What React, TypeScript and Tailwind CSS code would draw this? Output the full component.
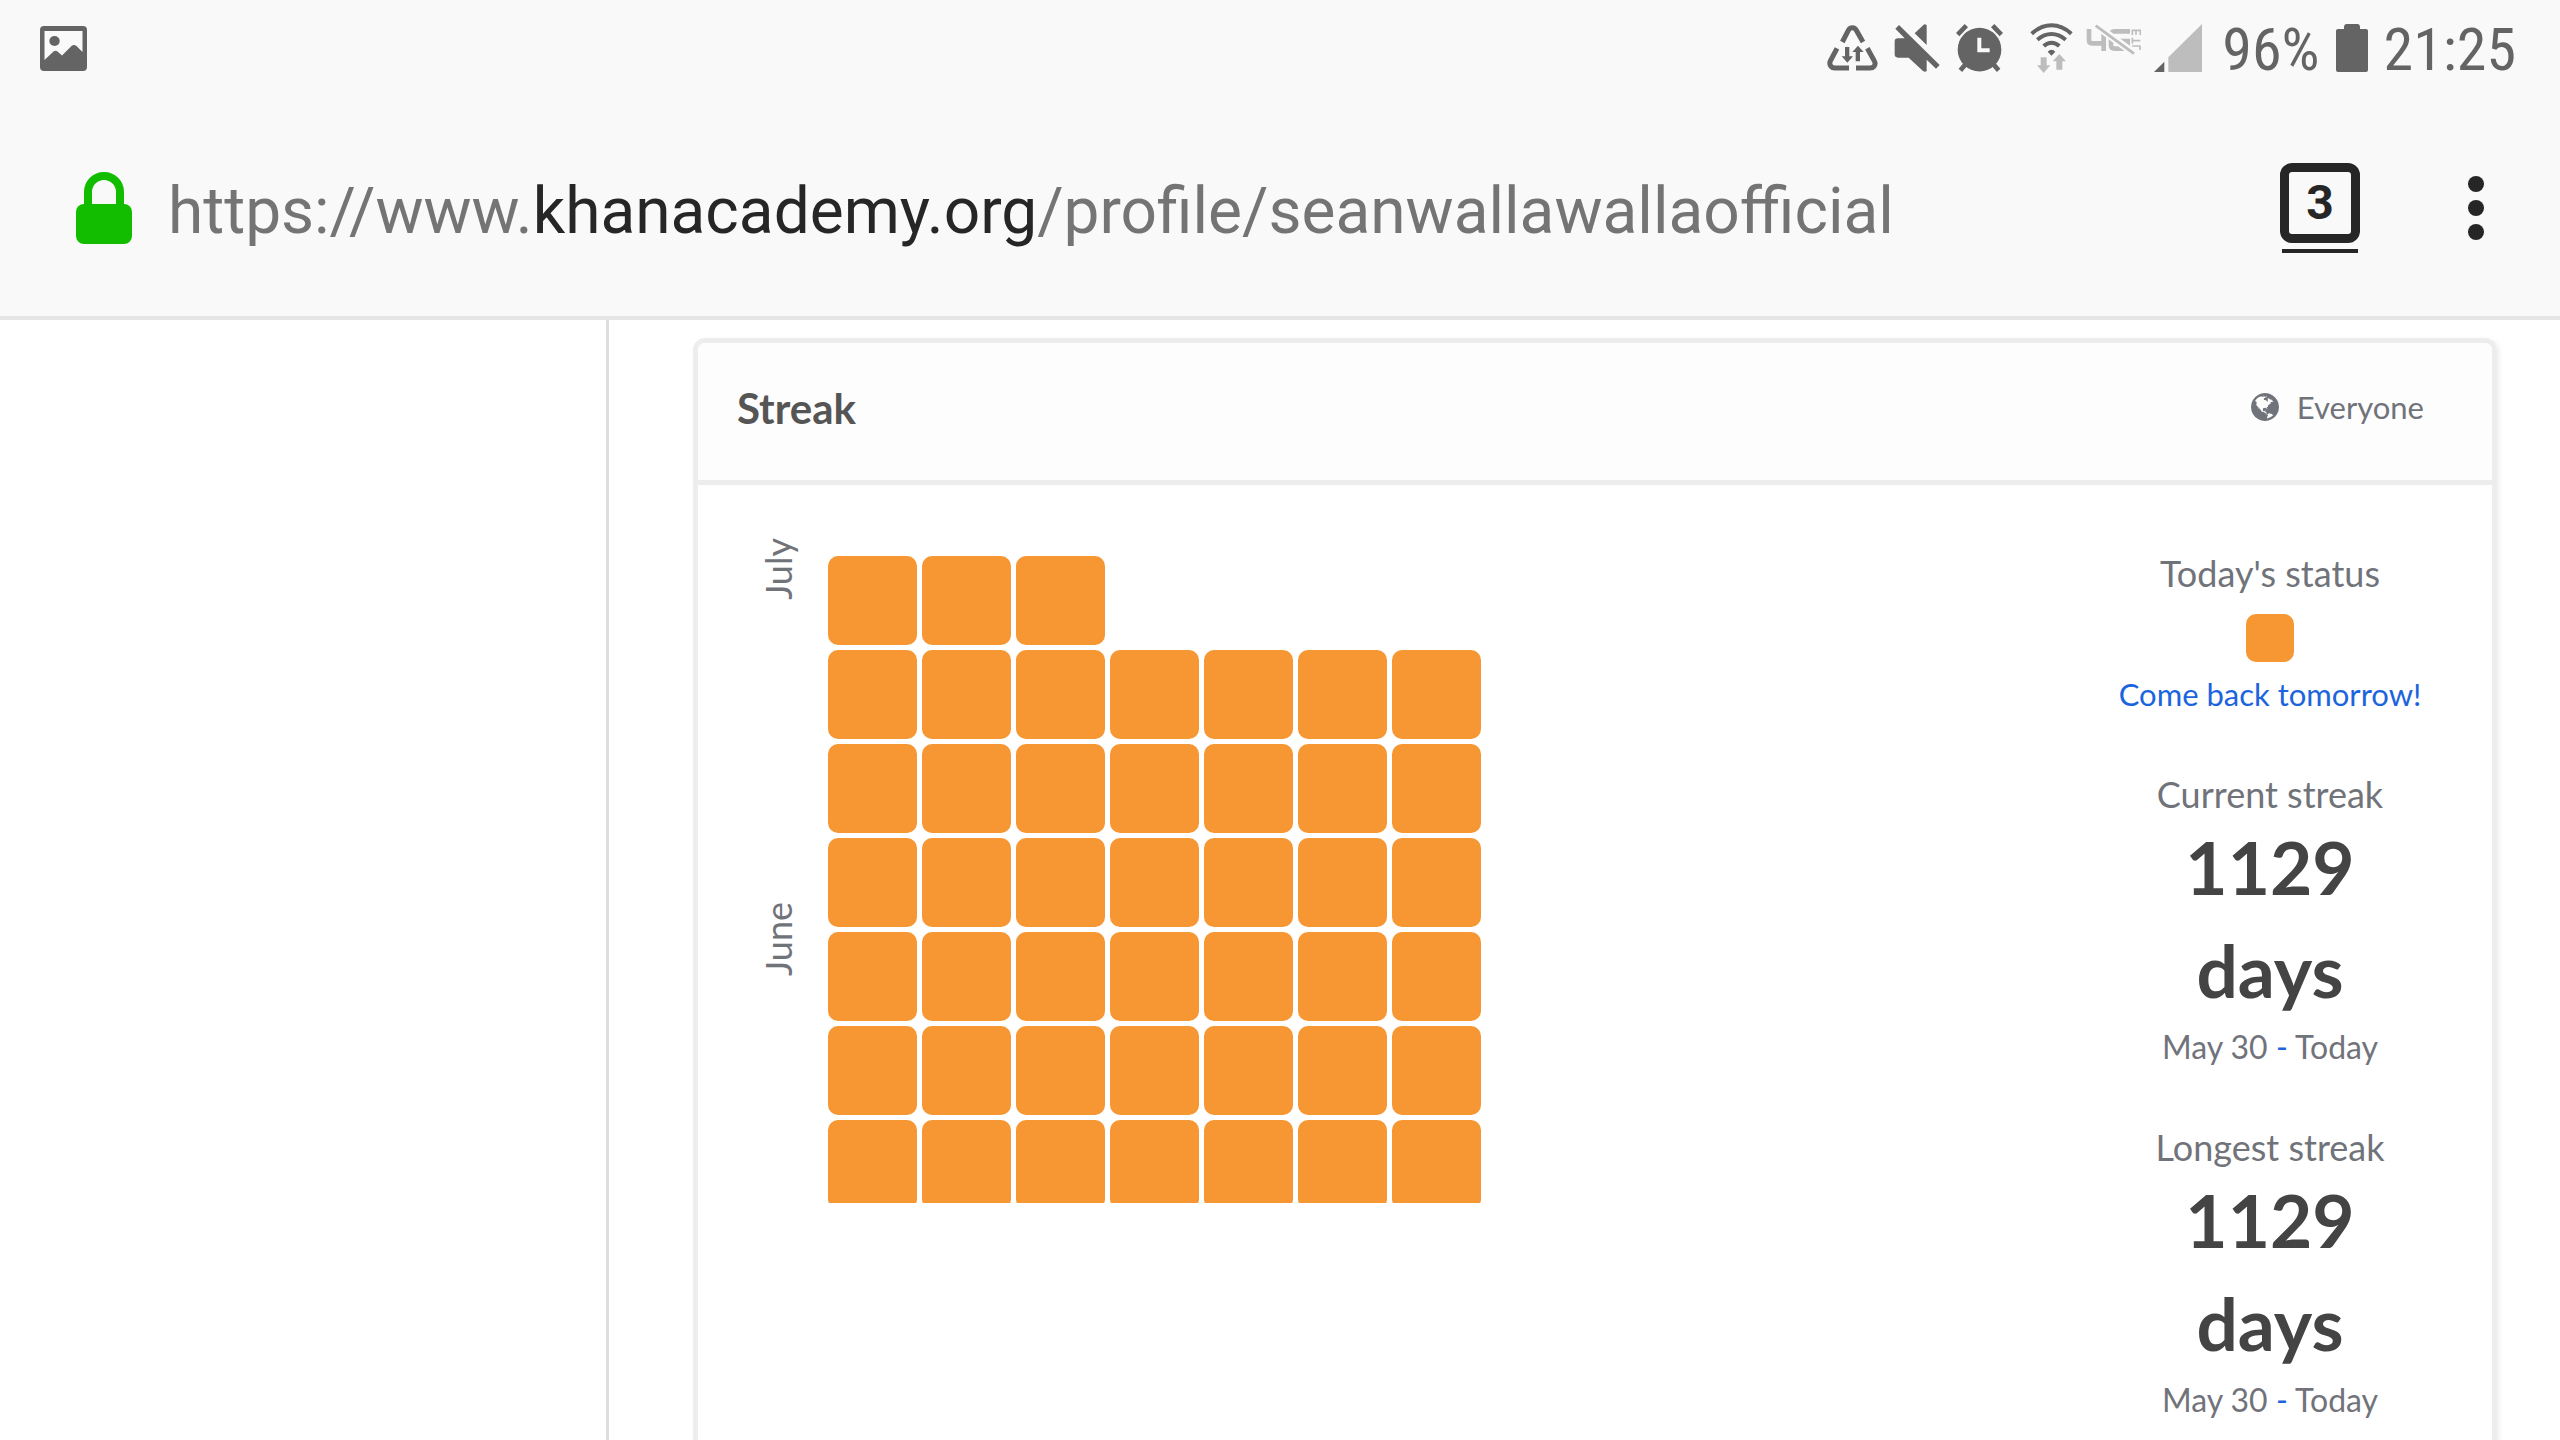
import type { ReactNode } from "react";

const GLOBE_PATH =
  "M768 128q209 0 385.500 103t279.500 279.500 103 385.500-103 385.500-279.500 279.500-385.500 103-385.500-103-279.500-279.500-103-385.500 103-385.500 279.500-279.500 385.500-103zm274 521q-2 1-9.500 9.500t-13.500 9.500q2 0 4.500-5t5-11 3.500-7q6-7 22-15 14-6 52-12 34-8 51 11-2-2 9.500-13t14.500-12q3-2 15-4.500t15-7.500l2-22q-12 1-17.500-7t-6.500-21q0 2-6 8 0-7-4.500-8t-11.500 1-9 1q-10-3-15-7.500t-8-16.500-4-15q-2-5-9.500-11t-9.500-10q-1-2-2.500-5.500t-3-6.500-4-5.500-5.500-2.500-7 5-7.500 10-4.500 5q-3-2-6-1.500t-4.500 1-4.500 3-5 3.500q-3 2-8.500 3t-8.500 2q15-5-1-11-10-4-16-3 9-4 7.500-12t-8.500-14h5q-1-4-8.500-8.500t-17.500-8.500-13-6q-8-5-34-9.500t-33-.5q-5 6-4.500 10.500t4 14 3.500 12.500q1 6-5.500 13t-6.500 12q0 7 14 15.500t10 21.500q-3 8-16 16t-16 12q-5 8-1.500 18.500t10.500 16.500q2 2 1.500 4t-3.500 4.500-5.500 4-6.500 3.500l-3 2q-11 5-20.500-6t-13.500-26q-7-25-16-30-23-8-29 1-5-13-41-26-25-9-58-4 6-1 0-15-7-15-19-12 3-6 4-17.500t1-13.500q3-13 12-23 1-1 7-8.500t9.500-13.500.5-6q35 4 50-11 5-5 11.500-17t10.500-17q9-6 14-5.500t14.500 5.500 14.500 5q14 1 15.500-11t-7.500-20q12 1 3-17-4-7-8-9-12-4-27 5-8 4 2 8-1-1-9.500 10.500t-16.500 17.500-16-5q-1-1-5.500-13.500t-9.500-13.500q-8 0-16 15 3-8-11-15t-24-8q19-12-8-27-7-4-20.500-5t-19.500 4q-5 7-5.500 11.500t5 8 10.500 5.500 11.500 4 8.500 3q14 10 8 14-2 1-8.500 3.500t-11.500 4.500-6 4q-3 4 0 14t-2 14q-5-5-9-17.500t-7-16.500q7 9-25 6l-10-1q-4 0-16 2t-20.500 1-13.500-8q-4-8 0-20 1-4 4-2-4-3-11-9.500t-10-8.500q-46 15-94 41 6 1 12-1 5-2 13-6.500t10-5.500q34-14 42-7l5-5q14 16 20 25-7-4-30-1-20 6-22 12 7 12 5 18-4-3-11.500-10t-14.500-11-15-5q-16 0-22 1-146 80-235 222 7 7 12 8 4 1 5 9t2.500 11 11.500-3q9 8 3 19 1-1 44 27 19 17 21 21 3 11-10 18-1-2-9-9t-9-4q-3 5 .5 18.500t10.500 12.500q-7 0-9.500 16t-2.500 35.500-1 23.500l2 1q-3 12 5.500 34.500t21.500 19.500q-13 3 20 43 6 8 8 9 3 2 12 7.500t15 10 10 10.500q4 5 10 22.500t14 23.500q-2 6 9.500 20t10.500 23q-1 0-2.500 1t-2.500 1q3 7 15.500 14t15.500 13q1 3 2 10t3 11 8 2q2-20-24-62-15-25-17-29-3-5-5.500-15.500t-4.500-14.500q2 0 6 1.500t8.500 3.500 7.500 4 2 3q-3 7 2 17.500t12 18.500 17 19 12 13q6 6 14 19.500t0 13.500q9 0 20 10t17 20q5 8 8 26t5 24q2 7 8.500 13.500t12.500 9.500l16 8 13 7q5 2 18.500 10.500t21.500 11.500q10 4 16 4t14.500-2.500 13.500-3.500q15-2 29 15t21 21q36 19 55 11-2 1 .5 7.500t8 15.500 9 14.500 5.500 8.500q5 6 18 15t18 15q6-4 7-9-3 8 7 20t18 10q14-3 14-32-31 15-49-18 0-1-2.500-5.500t-4-8.500-2.500-8.500 0-7.500 5-3q9 0 10-3.500t-2-12.500-4-13q-1-8-11-20t-12-15q-5 9-16 8t-16-9q0 1-1.500 5.500t-1.500 6.500q-13 0-15-1 1-3 2.500-17.500t3.500-22.500q1-4 5.500-12t7.500-14.500 4-12.500-4.500-9.500-17.500-2.500q-19 1-26 20-1 3-3 10.500t-5 11.500-9 7q-7 3-24 2t-24-5q-13-8-22.500-29t-9.500-37q0-10 2.500-26.500t3-25-5.500-24.500q3-2 9-9.500t10-10.500q2-1 4.500-1.500t4.500 0 4-1.500 3-6q-1-1-4-3-3-3-4-3 7 3 28.500-1.500t27.500 1.500q15 11 22-2 0-1-2.500-9.500t-.5-13.500q5 27 29 9 3 3 15.500 5t17.500 5q3 2 7 5.500t5.500 4.500 5-.5 8.500-6.500q10 14 12 24 11 40 19 44 7 3 11 2t4.500-9.500 0-14-1.500-12.500l-1-8v-18l-1-8q-15-3-18.500-12t1.500-18.500 15-18.500q1-1 8-3.500t15.500-6.500 12.500-8q21-19 15-35 7 0 11-9-1 0-5-3t-7.500-5-4.500-2q9-5 2-16 5-3 7.500-11t7.500-10q9 12 21 2 8-8 1-16 5-7 20.500-10.500t18.500-9.500q7 2 8-2t1-12 3-12q4-5 15-9t13-5l17-11q3-4 0-4 18 2 31-11 10-11-6-20 3-6-3-9.500t-15-5.500q3-1 11.500-.5t10.500-1.500q15-10-7-16-17-5-43 12zm-163 877q206-36 351-189-3-3-12.500-4.500t-12.500-3.500q-18-7-24-8 1-7-2.500-13t-8-9-12.500-8-11-7q-2-2-7-6t-7-5.500-7.500-4.500-8.500-2-10 1l-3 1q-3 1-5.500 2.500t-5.500 3-4 3 0 2.500q-21-17-36-22-5-1-11-5.500t-10.500-7-10-1.500-11.500 7q-5 5-6 15t-2 13q-7-5 0-17.500t2-18.500q-3-6-10.500-4.500t-12 4.500-11.500 8.500-9 6.500-8.500 5.500-8.500 7.500q-3 4-6 12t-5 11q-2-4-11.500-6.500t-9.500-5.500q2 10 4 35t5 38q7 31-12 48-27 25-29 40-4 22 12 26 0 7-8 20.500t-7 21.500q0 6 2 16z";

function PictureIcon() {
  return (
    <svg className="h-[45px] w-[47px]" viewBox="0 0 47 45" fill="#646464" aria-hidden="true">
      <path
        fillRule="evenodd"
        d="M4 0h39a4 4 0 0 1 4 4v37a4 4 0 0 1-4 4H4a4 4 0 0 1-4-4V4a4 4 0 0 1 4-4zM4.500 5v29L13.500 25.500Q15.500 24 17.500 25.500L22 29.500 31.500 20Q34 18 36.500 20L42.500 26V5z"
      />
      <ellipse cx="14.500" cy="15" rx="5.200" ry="5" />
    </svg>
  );
}

function DataSaverIcon() {
  return (
    <svg className="h-12 w-[51px]" viewBox="84 72 153 144" aria-hidden="true">
      <g fill="none" stroke="#646464" strokeWidth="15">
        <path d="M130 126L148 91Q152 83 160 83Q168 83 172 91L192 126" />
        <path d="M114 145L94 183Q90 191 96 199Q100 204 107 204H150" />
        <path d="M205 145L226 183Q231 191 225 199Q221 204 213 204H171" />
      </g>
      <path fill="#646464" d="M138 141h13v28h11l-17 19-17-19h10zM170 184h13v-28h11l-17-19-17 19h10z" />
    </svg>
  );
}

function MutedIcon() {
  return (
    <svg className="h-12 w-[46px]" viewBox="286 72 138 144" aria-hidden="true">
      <path
        fill="#646464"
        d="M290 86L301 75L423 195L412 206L384 179V213Q380 218 373 213L330 173H298Q288 173 288 163V125Q288 115 298 115H318zM348 100L375 74Q380 70 384 76V135z"
      />
    </svg>
  );
}

function AlarmIcon() {
  return (
    <svg className="h-12 w-[47px]" viewBox="474 72 141 144" aria-hidden="true">
      <circle cx="544.500" cy="149" r="65.500" fill="#646464" />
      <g stroke="#646464" strokeWidth="14">
        <path d="M479 104L505 77M610 104L584 77" />
        <path d="M502 194L487 211M587 194L602 211" />
      </g>
      <path fill="none" stroke="#f9f9f9" strokeWidth="12" d="M544 113V151H575" />
    </svg>
  );
}

function WifiIcon() {
  return (
    <svg className="h-[50px] w-[43px]" viewBox="696 68 129 150" aria-hidden="true">
      <g fill="none" stroke="#646464" strokeWidth="12">
        <path d="M701 100Q729 75 760.500 75T820 100" />
        <path d="M718 118Q738 101 760.500 101T803 118" />
        <path d="M737 137Q748 127 760.500 127T784 137" />
      </g>
      <path fill="#646464" d="M749 154Q760.500 142 772 154L760.500 166z" />
      <path fill="#bdbdbd" d="M728 171h18v24h11l-20 23-20-23h11zM775 208h18v-25h11l-20-22-20 22h11z" />
    </svg>
  );
}

function MobileDataIcon() {
  return (
    <svg className="h-12 w-[55px]" viewBox="866 72 165 144" aria-hidden="true">
      <g fill="none" stroke="#bdbdbd">
        <path strokeWidth="14" d="M875 87V121Q875 130 884 130H921M919 98V153" />
        <path strokeWidth="14" d="M998 94H952Q941 94 941 105V136Q941 146 952 146H991V123H964" />
        <path strokeWidth="5" d="M1029 138H1004M1028 150V138M1004 122H1029M1005 113V131M1005 105V91H1029V105M1016 91V104" />
      </g>
      <path stroke="#f9f9f9" strokeWidth="22" d="M897 77L1012 161" />
      <path stroke="#bdbdbd" strokeWidth="8" d="M895 77L1010 161" />
    </svg>
  );
}

function SignalIcon() {
  return (
    <svg className="h-12 w-12" viewBox="44 72 144 144" aria-hidden="true">
      <path fill="#646464" d="M44 216L75 185V216z" />
      <path fill="#bdbdbd" d="M87 216V172L188 72V216z" />
    </svg>
  );
}

function BatteryIcon() {
  return (
    <svg className="h-12 w-8" viewBox="0 0 96 144" fill="#646464" aria-hidden="true">
      <path d="M30 0H66Q72 2 72 8V15H90Q96 15 96 21V138Q96 144 90 144H6Q0 144 0 138V21Q0 15 6 15H24V8Q24 2 30 0z" />
    </svg>
  );
}

function LockIcon() {
  return (
    <svg className="h-[72px] w-14" viewBox="0 0 56 72" aria-hidden="true">
      <path fill="none" stroke="#12bd00" strokeWidth="8" d="M12 36V20a16 16 0 0 1 32 0V36" />
      <rect y="32" width="56" height="40" rx="8" fill="#12bd00" />
    </svg>
  );
}

function GlobeIcon() {
  return (
    <svg className="size-7" viewBox="0 128 1536 1536" fill="#71737a" fillRule="evenodd" aria-hidden="true">
      <path d={GLOBE_PATH} />
    </svg>
  );
}

const weeks = [
  { month: "July", days: 3 },
  { days: 7 },
  { days: 7 },
  { days: 7 },
  { month: "June", days: 7 },
  { days: 7 },
  { days: 7, clipped: true },
];

function Calendar() {
  return (
    <div className="flex flex-col gap-[5px] pt-[71px]">
      {weeks.map((week, i) => (
        <div key={i} className="flex">
          <div className="flex h-11 w-[72px] items-end">
            {week.month && (
              <span className="rotate-180 text-4xl leading-[44px] [writing-mode:vertical-rl]">
                {week.month}
              </span>
            )}
          </div>
          <div className={week.clipped ? "flex h-[83px] gap-[5px] overflow-hidden" : "flex gap-[5px]"}>
            {Array.from({ length: week.days }, (_, d) => (
              <div key={d} className="size-[89px] rounded-[10px] bg-[#f79733]" />
            ))}
          </div>
        </div>
      ))}
    </div>
  );
}

function Stat({ label, children }: { label: string; children: ReactNode }) {
  return (
    <section className="flex flex-col items-center">
      <h3 className="text-4xl leading-[44px]">{label}</h3>
      {children}
    </section>
  );
}

function StreakStat({ label, count }: { label: string; count: number }) {
  return (
    <Stat label={label}>
      <p className="flex flex-col items-center text-[73px] leading-[103px] font-bold text-[#444]">
        <span>{count}</span>
        <span>days</span>
      </p>
      <p className="mt-[3px] text-[32px] leading-[44px]">
        May 30 <span className="text-[#1c64de]">-</span> Today
      </p>
    </Stat>
  );
}

export default function App() {
  return (
    <div className="flex min-h-screen flex-col bg-white font-['Lato',sans-serif] text-[#71737a]">
      <header className="border-b-4 border-[#e6e6e6] bg-[#f9f9f9] font-['Roboto',sans-serif]">
        <div className="flex h-24 items-center pr-11 pl-10 text-[#646464]">
          <PictureIcon />
          <div className="ml-auto flex items-center font-['Roboto_Condensed','Roboto',sans-serif] text-[60px] leading-[72px]">
            <div className="flex items-center gap-4">
              <DataSaverIcon />
              <MutedIcon />
              <AlarmIcon />
            </div>
            <div className="ml-[27px] flex items-center gap-[13px]">
              <WifiIcon />
              <MobileDataIcon />
              <SignalIcon />
            </div>
            <div className="ml-5 flex items-center gap-4">
              <span className="pt-1">96%</span>
              <BatteryIcon />
              <time className="pt-1">21:25</time>
            </div>
          </div>
        </div>
        <div className="flex h-[220px] items-center pt-1 pr-[68px] pl-[76px]">
          <LockIcon />
          <button type="button" className="ml-9 pt-2 text-[64px] leading-[76px] text-[#747474]">
            https://www.<span className="text-[#262626]">khanacademy.org</span>/profile/seanwallawallaofficial
          </button>
          <button
            type="button"
            aria-label="3 open tabs"
            className="ml-auto flex flex-col items-center gap-1.5 text-[#262626]"
          >
            <span className="flex size-20 items-center justify-center rounded-xl border-[9px] border-[#262626] text-5xl font-bold">
              3
            </span>
            <span className="h-1 w-[76px] bg-[#262626]" />
          </button>
          <button type="button" aria-label="Menu" className="ml-[100px] flex w-8 flex-col items-center gap-2">
            <span className="size-4 rounded-full bg-[#262626]" />
            <span className="size-4 rounded-full bg-[#262626]" />
            <span className="size-4 rounded-full bg-[#262626]" />
          </button>
        </div>
      </header>
      <div className="flex flex-1">
        <aside className="w-[609px] shrink-0 border-r-[3px] border-[#ddd]" />
        <main className="flex flex-1 flex-col pt-[18px] pr-[63px] pl-[84px]">
          <article className="flex flex-1 flex-col rounded-t-xl border-x-[5px] border-t-[5px] border-[#ededed] shadow-[2px_2px_5px_rgba(0,0,0,0.08)]">
            <div className="flex h-[142px] items-center justify-between rounded-t-lg border-b-[5px] border-[#ededed] bg-[#fdfdfd] pr-[68px] pb-2 pl-[39px]">
              <h2 className="text-[42px] leading-[52px] font-bold text-[#555]">Streak</h2>
              <div className="flex items-center gap-[18px] pb-0.5 text-[31px] leading-[44px]">
                <GlobeIcon />
                Everyone
              </div>
            </div>
            <div className="flex items-start justify-between pr-[68px] pl-[58px]">
              <Calendar />
              <div className="flex min-w-[308px] flex-col gap-14 pt-[66px]">
                <Stat label="Today's status">
                  <div className="mt-[19px] size-12 rounded-[10px] bg-[#f79733]" />
                  <p className="mt-2.5 text-[31px] leading-[44px] text-[#1c64de]">Come back tomorrow!</p>
                </Stat>
                <StreakStat label="Current streak" count={1129} />
                <StreakStat label="Longest streak" count={1129} />
              </div>
            </div>
          </article>
        </main>
      </div>
    </div>
  );
}
